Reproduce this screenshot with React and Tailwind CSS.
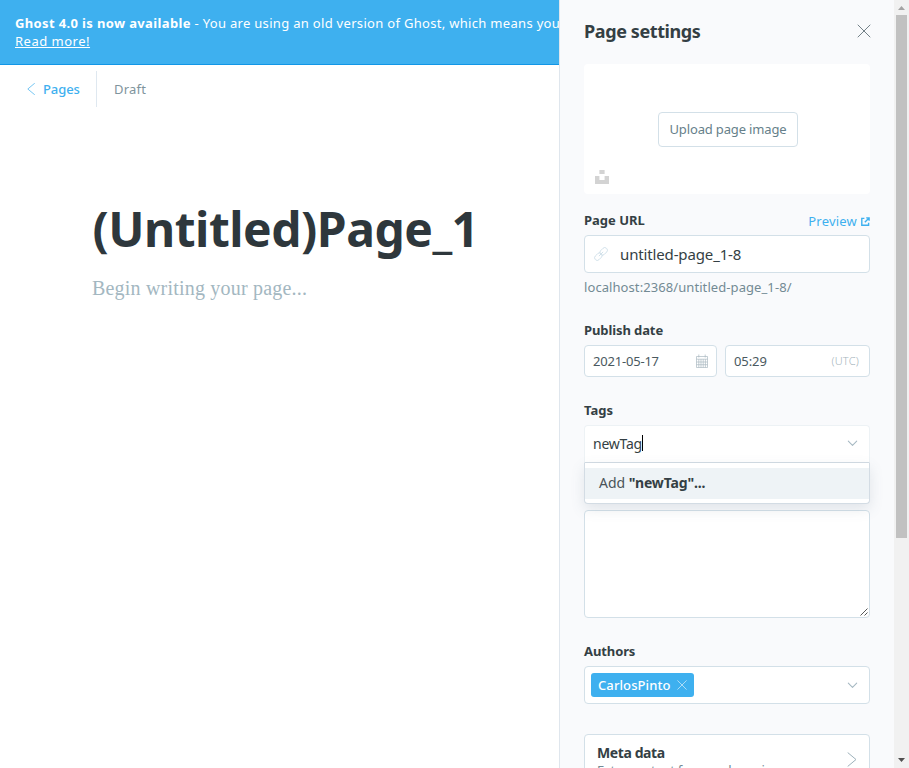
const CloseIcon = ({ className }) => (
  <svg viewBox="0 0 14 14" fill="none" stroke="currentColor" className={className}>
    <path d="M1 1 13 13M13 1 1 13" strokeLinecap="round" />
  </svg>
);

const Chevron = ({ className }) => (
  <svg viewBox="0 0 12 8" fill="none" stroke="currentColor" strokeWidth="1.2" className={className}>
    <path d="M1.2 1.2 6 6.2l4.8-5" strokeLinecap="round" strokeLinejoin="round" />
  </svg>
);

const Label = ({ children, className }) => (
  <div className={`h-5 text-[13px] leading-5 font-bold text-[#343f44] ${className}`}>
    <span>{children}</span>
  </div>
);

function Banner() {
  return (
    <div className="h-[65px] shrink-0 overflow-hidden border-b border-[#1296e6] bg-[#3eb0ef] pt-[14px] pl-[15px] text-[13px] leading-[18px] whitespace-nowrap text-white">
      <div>
        <b className="tracking-[0.36px]">Ghost 4.0 is now available</b>
        <span className="tracking-[0.31px]"> - You are using an old version of Ghost, which means you</span>
      </div>
      <span className="underline tracking-[0.5px]">Read more!</span>
    </div>
  );
}

function Editor() {
  return (
    <main className="flex h-full w-[559px] flex-col overflow-hidden bg-white">
      <Banner />
      <div className="mt-[6px] flex h-9 items-center text-[13px]">
        <div className="flex h-9 w-[97px] items-center border-r border-[#dfe8f0] pl-[27px] text-[#3eb0ef]">
          <svg viewBox="0 0 8 12" fill="none" stroke="currentColor" className="mr-2 h-3 w-2 opacity-70">
            <path d="M7.5 .4 .8 6l6.7 5.6" strokeLinecap="round" strokeLinejoin="round" />
          </svg>
          <span className="mt-[2px] font-medium tracking-[-0.1px]">Pages</span>
        </div>
        <span className="mt-[2px] pl-[17px] tracking-[0.2px] text-[#7f949d]">Draft</span>
      </div>
      <h1 className="mt-[92px] ml-[92.5px] h-[60px] text-[48px] leading-[60px] font-bold tracking-[-0.5px] whitespace-nowrap text-[#2e373c]">
        (Untitled)Page_1
      </h1>
      <p className="mt-[13px] ml-[92px] font-['Liberation_Serif',serif] text-[20px] leading-[32px] tracking-[0.2px] text-[#a3b7c1]">
        Begin writing your page...
      </p>
    </main>
  );
}

function FeatureImage() {
  return (
    <div className="relative flex h-[130px] shrink-0 items-center justify-center rounded bg-white pl-[2px]">
      <button className="h-[35px] w-[140px] rounded border border-[#d3e0e8] pt-px text-[13px] tracking-[-0.15px] whitespace-nowrap text-[#667f8a]">
        Upload page image
      </button>
      <svg viewBox="0 0 14 14" fill="#d3d3d3" className="absolute bottom-[10px] left-[11px] size-[14px]">
        <path d="M4.4 0h5.2v4H4.4zM0 6h4.4v4h5.2V6H14v8H0z" />
      </svg>
    </div>
  );
}

function UrlField() {
  return (
    <>
      <div className="mt-[17px] flex h-5 items-center justify-between text-[13px]">
        <Label className="-mt-[2px]">Page URL</Label>
        <a className="flex items-center text-[#3eb0ef]">
          <span className="mt-px tracking-[0.2px]">Preview</span>
          <svg viewBox="0 0 9 9" fill="none" stroke="currentColor" strokeWidth="1.4" className="ml-1 size-[9px]">
            <path d="M3.4 1.4H.8v6.8h6.8V5.8M3.8 5.2 7.8 1.2M5.2.9h2.9v2.8" />
          </svg>
        </a>
      </div>
      <div className="mt-[4px] flex h-[38px] shrink-0 items-center rounded border border-[#d3e0e8] bg-white pl-[9px] text-[15px] text-[#343f44]">
        <svg viewBox="0 0 14 14" fill="none" stroke="#cfdfe9" strokeWidth=".9" className="mr-3 size-[14px]">
          <g transform="rotate(-45 7 7)">
            <rect x="-.9" y="4.4" width="8.4" height="5.2" rx="2.4" />
            <rect x="6.5" y="4.4" width="8.4" height="5.2" rx="2.4" />
            <path d="M4 7h6" />
          </g>
        </svg>
        <span className="tracking-[-0.14px]">untitled-page_1-8</span>
      </div>
      <div className="mt-[4px] h-5 text-[13px] leading-5 tracking-[0.08px] text-[#738a94]">localhost:2368/untitled-page_1-8/</div>
    </>
  );
}

function PublishDate() {
  return (
    <>
      <Label className="mt-[23px] tracking-[-0.1px]">Publish date</Label>
      <div className="mt-[5px] flex h-8 shrink-0 gap-2 text-[13px] text-[#4a5960]">
        <div className="flex w-[133px] items-center justify-between rounded border border-[#d3e0e8] bg-white pr-2 pl-2">
          <span className="mt-px tracking-[-0.2px]">2021-05-17</span>
          <svg viewBox="0 0 12 14" fill="none" stroke="#aab9c1" strokeWidth=".7" className="-mt-px h-[14px] w-3">
            <path d="M.5 2.5h11v11H.5zM.5 5.2h11M.5 8h11M.5 10.7h11M2.8 5.2v8.3M5 5.2v8.3M7.2 5.2v8.3M9.4 5.2v8.3M2.8 .5v3M9.2 .5v3" />
          </svg>
        </div>
        <div className="flex flex-1 items-center justify-between rounded border border-[#d3e0e8] bg-white pr-[10px] pl-2">
          <span className="mt-px tracking-[-0.1px]">05:29</span>
          <span className="text-[11px] font-light tracking-[0.2px] text-[#a6b5bd]">(UTC)</span>
        </div>
      </div>
    </>
  );
}

function Tags() {
  return (
    <>
      <Label className="mt-[23px]">Tags</Label>
      <div className="relative mt-[5px] h-[38px] shrink-0">
        <div className="flex h-full items-center rounded-t border border-[#edf2f5] border-b-[#d3dce4] bg-white pr-[11px] pb-[2px] pl-2 text-[14px] text-[#343f44]">
          <span className="tracking-[-0.25px]">newTag</span>
          <i className="h-4 w-px bg-black" />
          <Chevron className="ml-auto h-[7px] w-[11px] text-[#a6b8c2]" />
        </div>
        <div className="absolute top-[38px] left-0 z-10 h-[41px] w-full rounded-b border border-t-0 border-[#d3dce4] bg-white pt-[5px] shadow-[0_5px_14px_rgba(90,105,125,0.15)]">
          <div className="h-[31px] bg-[#eef3f6] pl-[14px] text-[14px] leading-[30px] text-[#4a5459]">
            <span>Add </span>
            <b className="tracking-[-0.15px] text-[#343f44]">"newTag"...</b>
          </div>
        </div>
      </div>
    </>
  );
}

function Excerpt() {
  return (
    <div className="mt-[47px] flex h-[108px] shrink-0 items-end justify-end rounded border border-[#d3e0e8] bg-white p-px">
      <svg viewBox="0 0 8 8" stroke="#444" strokeWidth=".9" className="size-2">
        <path d="M.5 7.5l7-7M4.5 7.5l3-3" />
      </svg>
    </div>
  );
}

function Authors() {
  return (
    <>
      <Label className="mt-[23px] tracking-[-0.1px]">Authors</Label>
      <div className="mt-[5px] flex h-[38px] shrink-0 items-center rounded border border-[#d3e0e8] bg-white pr-[11px] pl-[6px]">
        <span className="flex h-6 w-[103px] items-center rounded-[3px] bg-[#3eb0ef] pl-[7px] text-[13px] font-medium text-white">
          <span className="mt-px tracking-[0.1px]">CarlosPinto</span>
          <CloseIcon className="mr-[7px] ml-auto size-[10px] opacity-80" />
        </span>
        <Chevron className="ml-auto h-[7px] w-[11px] text-[#a6b8c2]" />
      </div>
    </>
  );
}

function MetaData() {
  return (
    <div className="mt-[30px] flex h-[54px] shrink-0 justify-between rounded border border-[#d3e0e8] bg-white pt-[8px] pr-[12px] pl-3">
      <div>
        <div className="text-[14px] leading-5 font-bold tracking-[-0.4px] text-[#343f44]">Meta data</div>
        <div className="text-[13px] leading-[15px] tracking-[-0.3px] text-[#738a94]">Extra content for search engines</div>
      </div>
      <svg viewBox="0 0 10 15" fill="none" stroke="#9eb1bb" className="mt-[9px] h-[15px] w-[10px]">
        <path d="M1 .8 9 7.5 1 14.2" strokeLinecap="round" strokeLinejoin="round" />
      </svg>
    </div>
  );
}

function Scrollbar() {
  return (
    <div className="flex h-full w-[15px] flex-col items-center bg-[#f1f1f1]">
      <svg viewBox="0 0 15 15" className="size-[15px]">
        <path d="M4 10h7L7.5 6z" fill="#a3a3a3" />
      </svg>
      <div className="h-[523px] w-[11px] bg-[#c1c1c1]" />
      <svg viewBox="0 0 15 15" className="mt-auto size-[15px]">
        <path d="M4 5h7L7.5 9z" fill="#505050" />
      </svg>
    </div>
  );
}

export default function App() {
  return (
    <div className="flex h-[768px] w-[909px] overflow-hidden bg-white font-['Noto_Sans',sans-serif]">
      <Editor />
      <aside className="flex h-full w-[335px] flex-col overflow-hidden border-l border-[#dfe6ed] bg-[#f9fafc] pr-6 pl-6">
        <div className="flex h-16 shrink-0 items-center justify-between">
          <h2 className="-mt-[2px] text-[18px] font-bold tracking-[-0.4px] text-[#343f44]">Page settings</h2>
          <CloseIcon className="-mt-[2px] -mr-px size-[14px] text-[#738087]" />
        </div>
        <FeatureImage />
        <UrlField />
        <PublishDate />
        <Tags />
        <Excerpt />
        <Authors />
        <MetaData />
      </aside>
      <Scrollbar />
    </div>
  );
}
